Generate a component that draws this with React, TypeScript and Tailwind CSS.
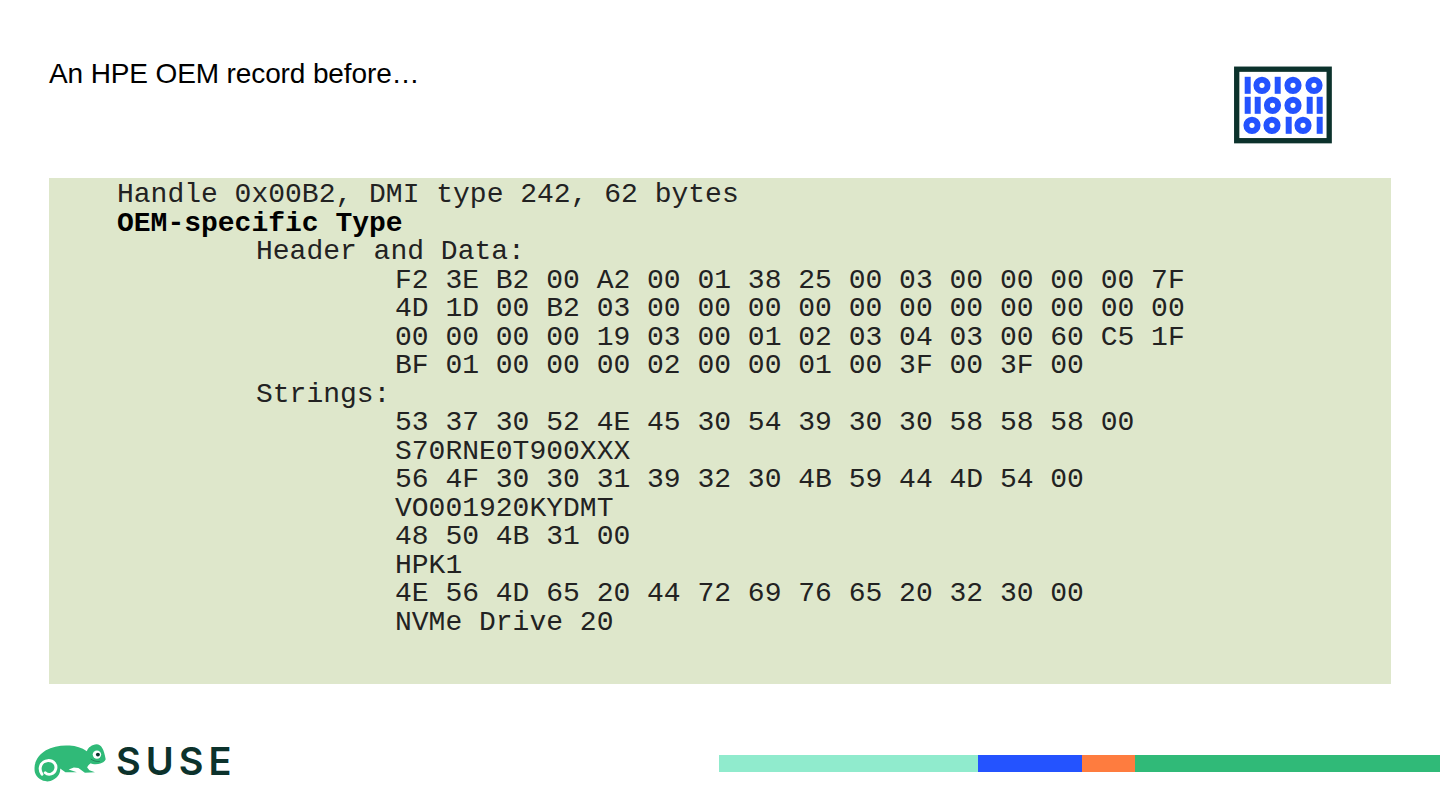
const lines: { text: string; level: number; bold?: boolean }[] = [
  { text: "Handle 0x00B2, DMI type 242, 62 bytes", level: 0 },
  { text: "OEM-specific Type", level: 0, bold: true },
  { text: "Header and Data:", level: 1 },
  { text: "F2 3E B2 00 A2 00 01 38 25 00 03 00 00 00 00 7F", level: 2 },
  { text: "4D 1D 00 B2 03 00 00 00 00 00 00 00 00 00 00 00", level: 2 },
  { text: "00 00 00 00 19 03 00 01 02 03 04 03 00 60 C5 1F", level: 2 },
  { text: "BF 01 00 00 00 02 00 00 01 00 3F 00 3F 00", level: 2 },
  { text: "Strings:", level: 1 },
  { text: "53 37 30 52 4E 45 30 54 39 30 30 58 58 58 00", level: 2 },
  { text: "S70RNE0T900XXX", level: 2 },
  { text: "56 4F 30 30 31 39 32 30 4B 59 44 4D 54 00", level: 2 },
  { text: "VO001920KYDMT", level: 2 },
  { text: "48 50 4B 31 00", level: 2 },
  { text: "HPK1", level: 2 },
  { text: "4E 56 4D 65 20 44 72 69 76 65 20 32 30 00", level: 2 },
  { text: "NVMe Drive 20", level: 2 },
]

const indents = ["pl-[68px]", "pl-[207px]", "pl-[346px]"]

// bars are [x of left edge], rings are [x of centre], one list per row
const binaryRows = [
  { bars: [11, 41], rings: [28, 59, 80] },
  { bars: [11, 21, 73, 83], rings: [38.5, 59] },
  { bars: [52, 83], rings: [18, 38, 69] },
]

function BinaryIcon() {
  return (
    <svg width="98" height="78" viewBox="0 0 98 78" className="mr-[108px] mt-[9px] shrink-0">
      <rect x="2.700" y="3.200" width="92.500" height="71.500" fill="#fff" stroke="#0c322c" strokeWidth="5.300" />
      {binaryRows.map((row, r) => {
        const cy = 19.3 + r * 20
        return (
          <g key={r} fill="#2453ff">
            {row.bars.map((x) => (
              <rect key={x} x={x - 0.3} y={cy - 8.5} width="6" height="17" />
            ))}
            {row.rings.map((x) => (
              <circle key={x} cx={x} cy={cy} r="5.600" fill="none" stroke="#2453ff" strokeWidth="6" />
            ))}
          </g>
        )
      })}
    </svg>
  )
}

function Chameleon() {
  return (
    <svg width="78" height="42" viewBox="0 0 240 135" preserveAspectRatio="none" className="shrink-0">
      <path
        d="M17 92C16 72 28 48 52 33C72 21 100 16 125 18C145 19 162 25 178 36C182 24 194 15 208 14C222 14 231 30 236 62C234 70 224 76 205 78C198 78 194 77 190 75C184 79 181 83 179 88L186 97L203 104L172 105L152 90L138 88L122 95L147 104L112 104L96 92C97 108 88 124 66 132C44 137 24 124 18 104C17 100 17 96 17 92Z"
        fill="#30ba78"
      />
      <path
        d="M40 110C28 92 36 68 58 66C76 65 86 80 82 94C78 110 60 115 50 105"
        fill="none"
        stroke="#fff"
        strokeWidth="9"
        strokeLinecap="round"
      />
      <circle cx="209" cy="47" r="13" fill="#fff" />
      <circle cx="212" cy="47" r="6" fill="#0c322c" />
      <path d="M190 61C198 67 207 70 218 69" fill="none" stroke="#0c322c" strokeWidth="2" strokeOpacity="0.6" />
    </svg>
  )
}

export default function App() {
  return (
    <div className="flex h-[810px] w-[1440px] flex-col overflow-hidden bg-white font-['Liberation_Sans',sans-serif] text-black">
      <div className="flex h-[178px] items-start justify-between pl-[49px] pt-[57px]">
        <h1 className="text-[28px] leading-[34px] font-normal tracking-[-0.12px]">An HPE OEM record before…</h1>
        <BinaryIcon />
      </div>

      <div className="mx-[49px] h-[506px] bg-[#dee7cb] pt-[3px] font-['Liberation_Mono',monospace] text-[28px] leading-[28.5px] whitespace-pre text-[#222]">
        {lines.map((line) => (
          <div key={line.text} className={`${indents[line.level]} ${line.bold ? "font-bold text-black" : ""}`}>
            {line.text}
          </div>
        ))}
      </div>

      <div className="flex flex-1 items-start justify-between">
        <div className="ml-[29px] mt-[56px] flex items-center gap-[9px]">
          <Chameleon />
          <span className="font-['Inter',sans-serif] text-[38px] leading-[38px] font-semibold tracking-[5px] text-[#0c322c]">
            SUSE
          </span>
        </div>
        <div className="mt-[71px] flex h-[17px] w-[721px]">
          <div className="w-[259px] bg-[#90ebcd]" />
          <div className="w-[104px] bg-[#2453ff]" />
          <div className="w-[53px] bg-[#fe7c3f]" />
          <div className="flex-1 bg-[#30ba78]" />
        </div>
      </div>
    </div>
  )
}
